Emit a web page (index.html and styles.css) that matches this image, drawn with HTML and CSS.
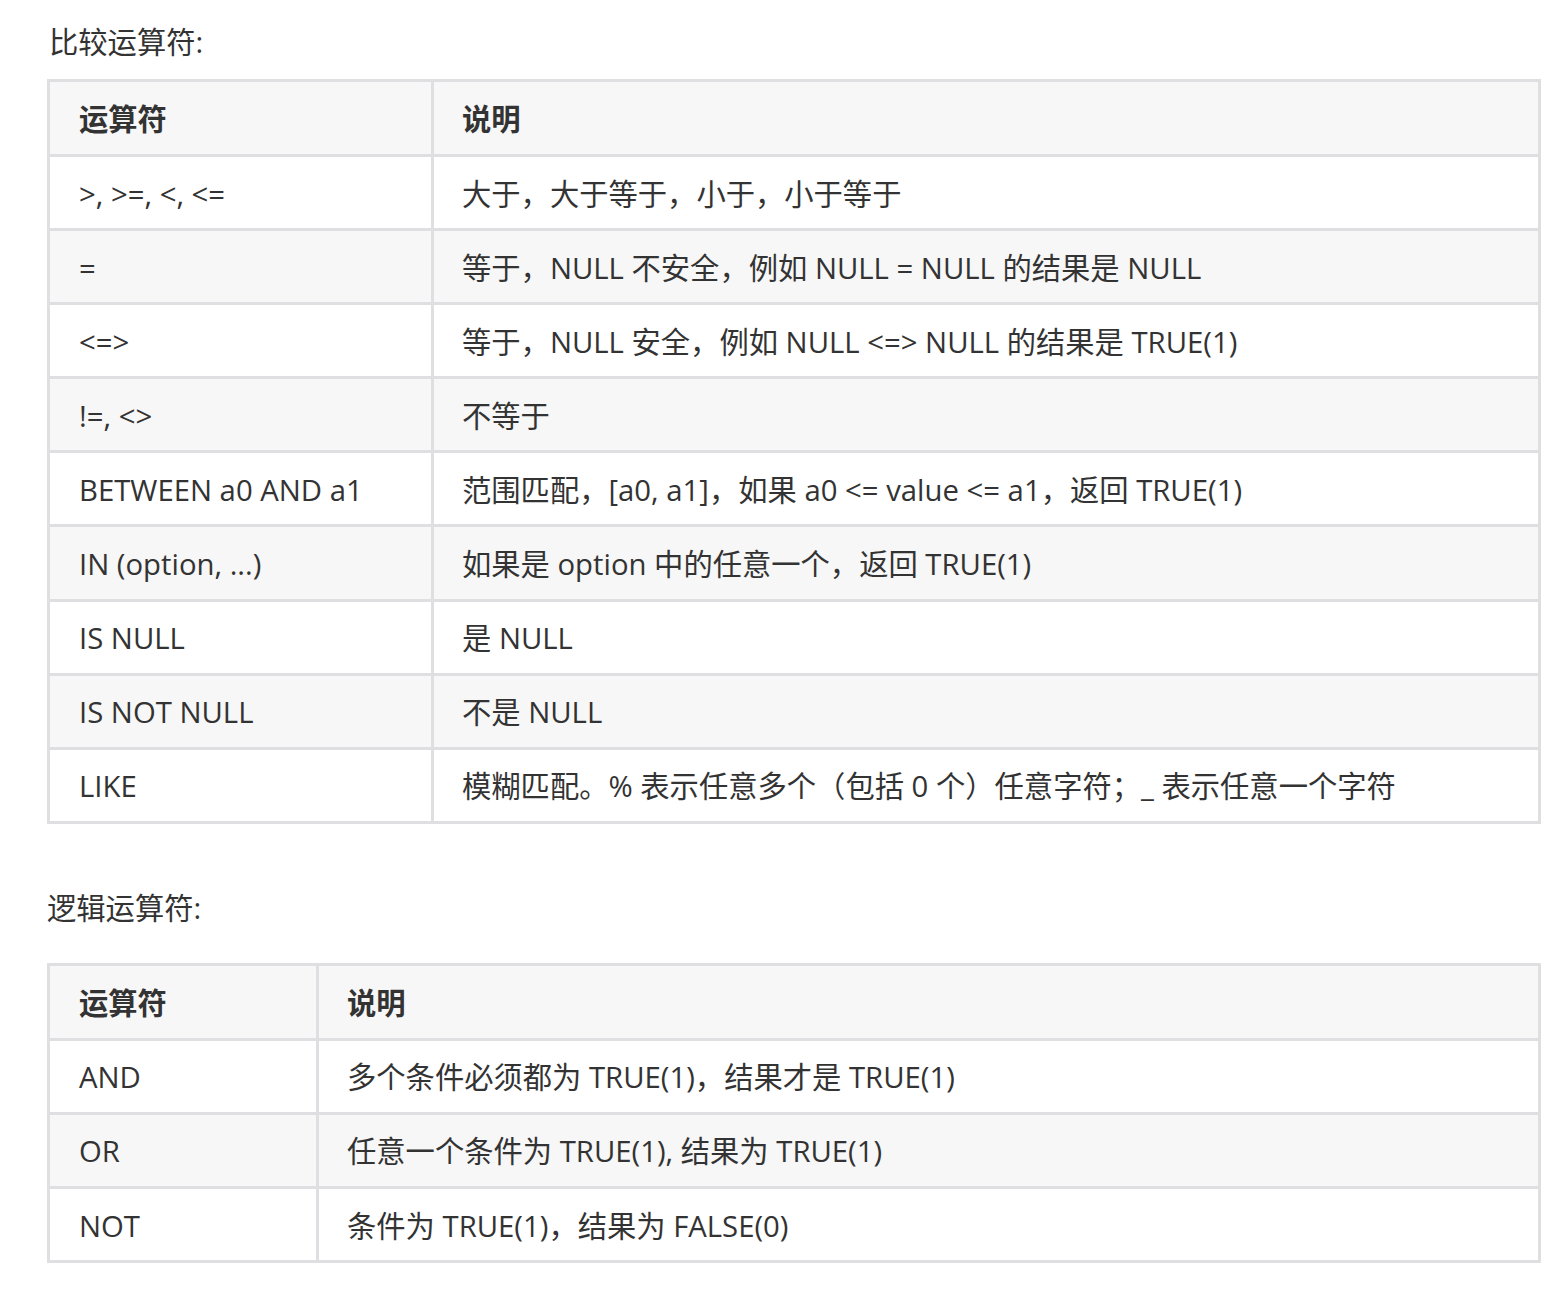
FILE: index.html
```html
<!DOCTYPE html>
<html lang="zh-CN">
<head>
<meta charset="utf-8">
<title>运算符</title>
<link rel="stylesheet" href="styles.css">
</head>
<body>
<div class="page">
  <div class="title title-first">比较运算符:</div>
  <table class="grid grid-cmp">
    <colgroup><col class="c1"><col class="c2"></colgroup>
    <thead>
      <tr><th>运算符</th><th>说明</th></tr>
    </thead>
    <tbody>
      <tr><td>&gt;, &gt;=, &lt;, &lt;=</td><td>大于，大于等于，小于，小于等于</td></tr>
      <tr><td>=</td><td>等于，NULL 不安全，例如 NULL = NULL 的结果是 NULL</td></tr>
      <tr><td>&lt;=&gt;</td><td>等于，NULL 安全，例如 NULL &lt;=&gt; NULL 的结果是 TRUE(1)</td></tr>
      <tr><td>!=, &lt;&gt;</td><td>不等于</td></tr>
      <tr><td>BETWEEN a0 AND a1</td><td>范围匹配，[a0, a1]，如果 a0 &lt;= value &lt;= a1，返回 TRUE(1)</td></tr>
      <tr><td>IN (option, ...)</td><td>如果是 option 中的任意一个，返回 TRUE(1)</td></tr>
      <tr><td>IS NULL</td><td>是 NULL</td></tr>
      <tr><td>IS NOT NULL</td><td>不是 NULL</td></tr>
      <tr><td>LIKE</td><td>模糊匹配。% 表示任意多个（包括 0 个）任意字符；_ 表示任意一个字符</td></tr>
    </tbody>
  </table>
  <div class="title title-second">逻辑运算符:</div>
  <table class="grid grid-logic">
    <colgroup><col class="c1"><col class="c2"></colgroup>
    <thead>
      <tr><th>运算符</th><th>说明</th></tr>
    </thead>
    <tbody>
      <tr><td>AND</td><td>多个条件必须都为 TRUE(1)，结果才是 TRUE(1)</td></tr>
      <tr><td>OR</td><td>任意一个条件为 TRUE(1), 结果为 TRUE(1)</td></tr>
      <tr><td>NOT</td><td>条件为 TRUE(1)，结果为 FALSE(0)</td></tr>
    </tbody>
  </table>
</div>
</body>
</html>
```

FILE: styles.css
```css
html, body {
  margin: 0;
  padding: 0;
  background: #ffffff;
}

body {
  font-family: "Open Sans", "Noto Sans CJK SC", sans-serif;
  font-size: 29.3px;
  color: #333333;
}

.page {
  padding-left: 47px;
  width: 1494px;
}

.title {
  height: 46px;
  line-height: 46px;
  white-space: nowrap;
}

.title-first {
  padding-top: 19px;
  margin-bottom: 14px;
  padding-left: 2px;
}

.title-second {
  margin-top: 61px;
  margin-bottom: 32px;
}

.grid {
  border-collapse: separate;
  border-spacing: 0;
  border-top: 3px solid #dfdfe2;
  border-left: 3px solid #dfdfe2;
  table-layout: fixed;
  width: 1494px;
}

.grid th,
.grid td {
  border-right: 3px solid #dfdfe2;
  border-bottom: 3px solid #dfdfe2;
  padding: 2px 0 0 28px;
  height: 69.1px;
  text-align: left;
  vertical-align: middle;
  white-space: nowrap;
  line-height: 40px;
}

.grid td:first-child,
.grid th:first-child {
  padding-left: 29px;
}

.grid th {
  font-weight: 700;
  background: #f7f7f7;
  height: 70px;
}

.grid tbody tr:nth-child(even) td {
  background: #f7f7f7;
}

.grid-cmp .c1 { width: 384px; }
.grid-cmp .c2 { width: 1107px; }

.grid-logic .c1 { width: 269px; }
.grid-logic .c2 { width: 1222px; }
```
